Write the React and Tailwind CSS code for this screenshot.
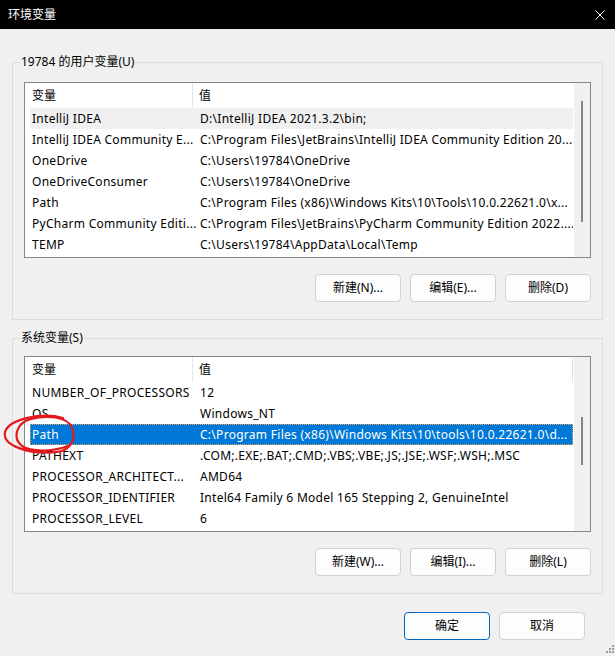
import React from 'react';

const userVars = [
  ['IntelliJ IDEA', 'D:\\IntelliJ IDEA 2021.3.2\\bin;'],
  ['IntelliJ IDEA Community E...', 'C:\\Program Files\\JetBrains\\IntelliJ IDEA Community Edition 20...'],
  ['OneDrive', 'C:\\Users\\19784\\OneDrive'],
  ['OneDriveConsumer', 'C:\\Users\\19784\\OneDrive'],
  ['Path', 'C:\\Program Files (x86)\\Windows Kits\\10\\Tools\\10.0.22621.0\\x...'],
  ['PyCharm Community Editi...', 'C:\\Program Files\\JetBrains\\PyCharm Community Edition 2022....'],
  ['TEMP', 'C:\\Users\\19784\\AppData\\Local\\Temp'],
];

const sysVars = [
  ['NUMBER_OF_PROCESSORS', '12'],
  ['OS', 'Windows_NT'],
  ['Path', 'C:\\Program Files (x86)\\Windows Kits\\10\\tools\\10.0.22621.0\\d...'],
  ['PATHEXT', '.COM;.EXE;.BAT;.CMD;.VBS;.VBE;.JS;.JSE;.WSF;.WSH;.MSC'],
  ['PROCESSOR_ARCHITECT...', 'AMD64'],
  ['PROCESSOR_IDENTIFIER', 'Intel64 Family 6 Model 165 Stepping 2, GenuineIntel'],
  ['PROCESSOR_LEVEL', '6'],
];

const Button = ({ children, primary }) => (
  <button
    className={`h-[28px] w-[86px] rounded-[4px] border bg-[#fdfdfd] text-[12px] text-black ${
      primary ? 'border-[#0067c0]' : 'border-[#d0d0d0]'
    }`}
  >
    {children}
  </button>
);

const VarList = ({ rows, grayRow, blueRow, thumbTop, thumbHeight, headerLine }) => (
  <div className="flex h-[176px] border border-[#828790] bg-white">
    <div className="flex w-[548px] flex-col">
      <div className="flex h-[25px] items-center">
        <div className="ml-[5px] flex h-full w-[163px] items-center border-r border-[#e5e5e5] pl-[2px]">变量</div>
        <div className="flex h-full flex-1 items-center pl-[6px]">值</div>
        {headerLine && <div className="h-full w-px bg-[#e0e0e0]" />}
      </div>
      {rows.map(([name, value], i) => (
        <div
          key={name + i}
          className={`ml-[5px] flex h-[21px] items-center whitespace-nowrap tracking-[0.28px] ${
            i === grayRow ? 'bg-[#f0f0f0]' : ''
          } ${i === blueRow ? 'bg-[#0078d7] text-white outline-1 -outline-offset-1 outline-dotted outline-[#f5a55a]' : ''}`}
        >
          <div className="w-[170px] overflow-hidden pl-[2px]">{name}</div>
          <div className="flex-1 overflow-hidden">{value}</div>
        </div>
      ))}
    </div>
    <div className="ml-px flex-1 bg-[#f0f0f0] pl-[7px]">
      <div className="w-[2px] bg-[#858585]" style={{ marginTop: thumbTop, height: thumbHeight }} />
    </div>
  </div>
);

const Group = ({ title, className, children }) => (
  <fieldset className={`border border-[#dcdcdc] px-[11px] ${className}`}>
    <legend className="-ml-[4px] px-[1px] text-[12px] leading-[16px]">{title}</legend>
    {children}
  </fieldset>
);

export default function App() {
  return (
    <div
      className="relative h-[656px] w-[615px] overflow-hidden bg-[#f0f0f0] text-[12px] text-black"
      style={{ fontFamily: '"Noto Sans", "Noto Sans CJK SC", sans-serif' }}
    >
      <div className="flex h-[29px] items-center justify-between bg-black pl-2 pr-[10px] text-white">
        <span>环境变量</span>
        <svg width="10" height="10" viewBox="0 0 10 10">
          <path d="M0.5 0.5 L9.5 9.5 M9.5 0.5 L0.5 9.5" stroke="white" strokeWidth="1" />
        </svg>
      </div>

      <div className="px-3">
        <Group title="19784 的用户变量(U)" className="mt-[25px] pb-[17px] pt-[12px]">
          <VarList rows={userVars} grayRow={0} thumbTop={18} thumbHeight={121} />
          <div className="mt-[16px] flex justify-end gap-[9px]">
            <Button>新建(N)...</Button>
            <Button>编辑(E)...</Button>
            <Button>删除(D)</Button>
          </div>
        </Group>

        <Group title="系统变量(S)" className="mt-[10px] pb-[17px] pt-[10px]">
          <VarList rows={sysVars} blueRow={2} thumbTop={60} thumbHeight={48} headerLine />
          <div className="mt-[16px] flex justify-end gap-[9px]">
            <Button>新建(W)...</Button>
            <Button>编辑(I)...</Button>
            <Button>删除(L)</Button>
          </div>
        </Group>

        <div className="mt-[18px] flex justify-end gap-[9px] pr-[18px]">
          <Button primary>确定</Button>
          <Button>取消</Button>
        </div>
      </div>

      {/* red hand-drawn mark around Path */}
      <svg className="pointer-events-none absolute left-0 top-[400px]" width="90" height="60" viewBox="0 0 90 60">
        <path
          d="M63 18 C42 12 9 19 5 32 C2 46 30 55 57 52 C72 50 76 38 72 28 C68 16 46 15 31 19 C16 23 12 38 22 46 C31 52 52 52 68 46"
          fill="none"
          stroke="#e3191c"
          strokeWidth="2.2"
          strokeLinecap="round"
        />
      </svg>

      <svg className="absolute bottom-[1px] right-[1px]" width="10" height="10" viewBox="0 0 10 10">
        <g fill="#9a9a9a">
          <rect x="8" y="0" width="2" height="2" />
          <rect x="5" y="3" width="2" height="2" />
          <rect x="8" y="3" width="2" height="2" />
          <rect x="2" y="6" width="2" height="2" />
          <rect x="5" y="6" width="2" height="2" />
          <rect x="8" y="6" width="2" height="2" />
        </g>
      </svg>
    </div>
  );
}
